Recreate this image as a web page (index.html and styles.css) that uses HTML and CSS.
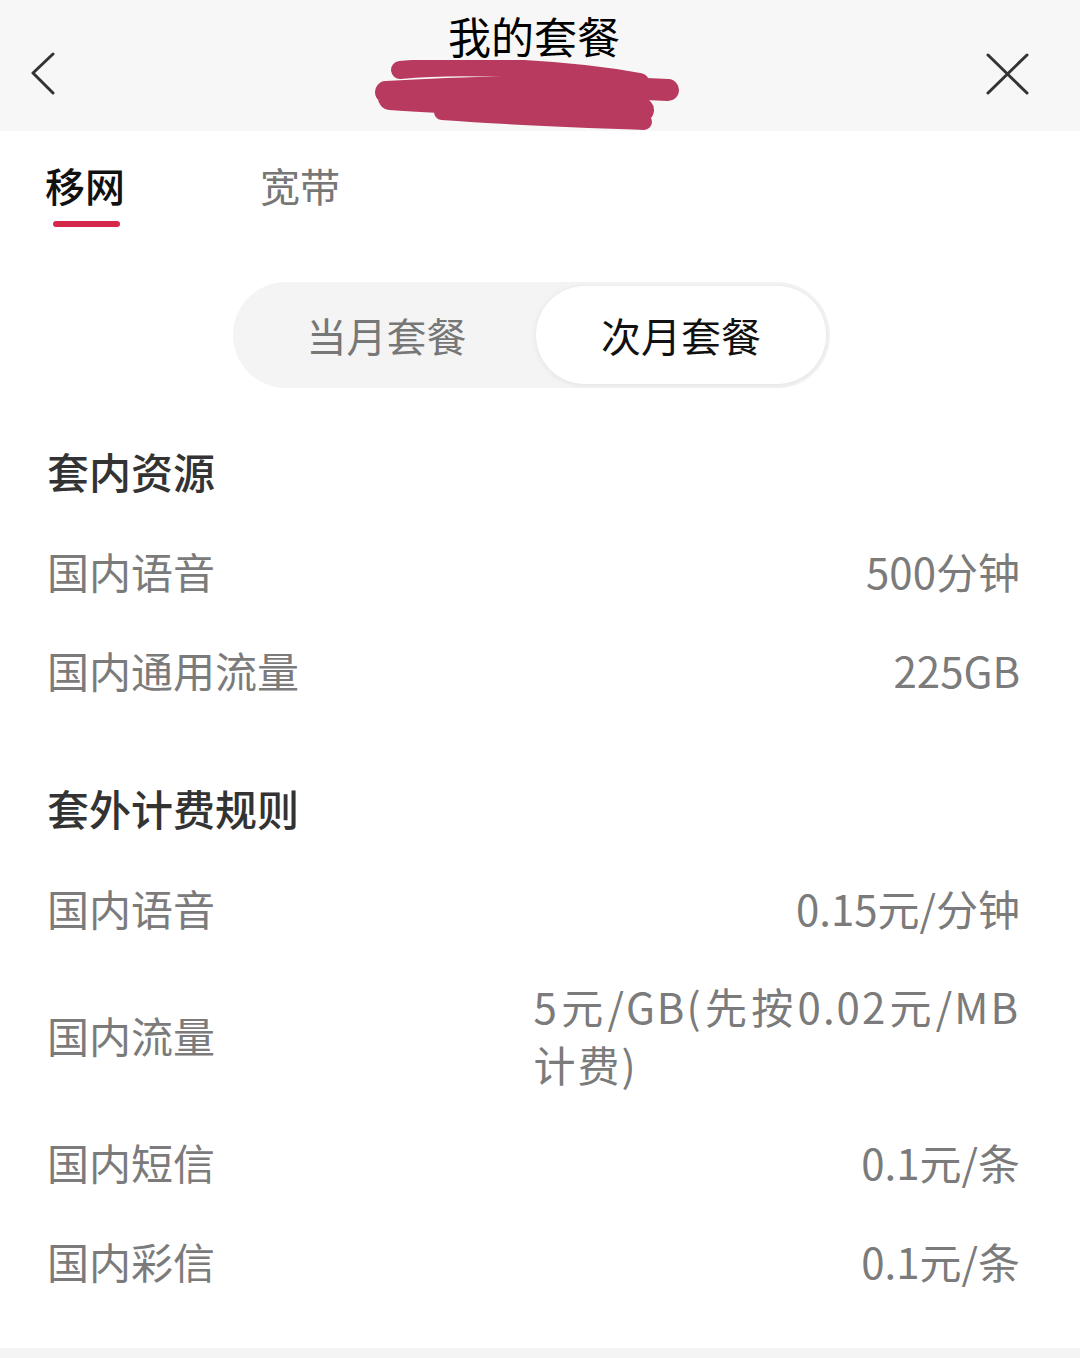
FILE: index.html
```html
<!DOCTYPE html>
<html lang="zh-CN">
<head>
<meta charset="utf-8">
<title>我的套餐</title>
<link rel="stylesheet" href="styles.css">
</head>
<body>
<header class="topbar">
  <button class="icon-btn back" aria-label="返回">
    <svg width="26" height="44" viewBox="0 0 26 44"><path d="M23 2 L3 21 L23 41" fill="none" stroke="#333" stroke-width="3" stroke-linecap="round" stroke-linejoin="round"/></svg>
  </button>
  <h1 class="title">我的套餐</h1>
  <button class="icon-btn close" aria-label="关闭">
    <svg width="44" height="44" viewBox="0 0 44 44"><path d="M2 3 L41 41 M41 3 L2 41" fill="none" stroke="#333" stroke-width="3" stroke-linecap="round"/></svg>
  </button>
  <svg class="redact" width="320" height="72" viewBox="0 0 320 72" aria-hidden="true">
    <g fill="none" stroke="#b83a5e" stroke-linecap="round" stroke-linejoin="round">
      <path d="M28 10 C90 4 190 8 268 22" stroke-width="18"/>
      <path d="M14 32 C110 26 220 26 296 30" stroke-width="22"/>
      <path d="M18 38 C100 44 200 46 270 50" stroke-width="24"/>
      <path d="M70 52 C150 58 220 60 272 62" stroke-width="16"/>
    </g>
  </svg>
</header>

<nav class="tabs">
  <div class="tab active">移网<span class="underline"></span></div>
  <div class="tab">宽带</div>
</nav>

<div class="segment">
  <div class="seg-item">当月套餐</div>
  <div class="seg-item selected">次月套餐</div>
</div>

<main class="content">
  <section class="section">
    <h2 class="section-title">套内资源</h2>
    <div class="rows">
      <div class="row"><span class="label">国内语音</span><span class="value">500分钟</span></div>
      <div class="row"><span class="label">国内通用流量</span><span class="value">225GB</span></div>
    </div>
  </section>
  <section class="section">
    <h2 class="section-title">套外计费规则</h2>
    <div class="rows">
      <div class="row"><span class="label">国内语音</span><span class="value">0.15元/分钟</span></div>
      <div class="row"><span class="label">国内流量</span><span class="value multi">5元/GB(先按0.02元/MB计费)</span></div>
      <div class="row"><span class="label">国内短信</span><span class="value">0.1元/条</span></div>
      <div class="row"><span class="label">国内彩信</span><span class="value">0.1元/条</span></div>
    </div>
  </section>
</main>

<footer class="bottom-strip"></footer>
</body>
</html>
```

FILE: styles.css
```css
* { box-sizing: border-box; }

html, body {
  margin: 0;
  padding: 0;
}

body {
  width: 1080px;
  height: 1358px;
  background: #ffffff;
  font-family: "Noto Sans CJK SC", "Noto Sans", sans-serif;
  display: flex;
  flex-direction: column;
  overflow: hidden;
}

.topbar {
  position: relative;
  height: 131px;
  background: #f7f7f7;
  display: grid;
  grid-template-columns: 1fr auto 1fr;
  align-items: start;
  padding: 0 50px 0 32px;
}

.icon-btn {
  border: 0;
  background: none;
  padding: 0;
  margin-top: 52px;
  display: flex;
}

.back { justify-self: start; margin-left: -2px; }
.close { justify-self: end; }

.title {
  margin: 8px 0 0 0;
  padding-left: 6px;
  font-size: 43px;
  line-height: 54px;
  font-weight: 400;
  color: #000;
}

.redact {
  position: absolute;
  left: 372px;
  top: 60px;
}

.tabs {
  display: flex;
  gap: 135px;
  padding: 30px 0 0 45px;
}

.tab {
  position: relative;
  font-size: 40px;
  line-height: 48px;
  color: #777;
  display: flex;
  flex-direction: column;
  align-items: center;
}

.tab.active {
  color: #111;
  font-weight: 500;
}

.underline {
  width: 67px;
  height: 6px;
  border-radius: 3px;
  background: #d6284a;
  margin-top: 12px;
  margin-left: 3px;
}

.segment {
  margin: 55px 0 0 233px;
  width: 597px;
  height: 106px;
  border-radius: 53px;
  background: #f4f4f4;
  padding: 4px;
  display: grid;
  grid-template-columns: 1fr 290px;
}

.seg-item {
  display: flex;
  align-items: center;
  justify-content: center;
  font-size: 40px;
  color: #777;
  border-radius: 49px;
}

.seg-item.selected {
  background: #ffffff;
  color: #111;
  font-weight: 400;
  box-shadow: 0 1px 6px rgba(0, 0, 0, 0.08);
}

.content {
  padding: 53px 60px 0 47px;
}

.section + .section {
  margin-top: 78px;
}

.section-title {
  margin: 0;
  font-size: 42px;
  line-height: 60px;
  font-weight: 500;
  color: #333;
}

.rows {
  display: flex;
  flex-direction: column;
  gap: 39px;
  margin-top: 40px;
}

.row {
  display: flex;
  justify-content: space-between;
  align-items: center;
  font-size: 42px;
  line-height: 60px;
  color: #7b7b7b;
}

.label {
  flex: none;
}

.value {
  max-width: 50%;
  text-align: justify;
  margin-left: auto;
}

.value.multi {
  line-height: 58px;
  letter-spacing: 2px;
}

.bottom-strip {
  margin-top: auto;
  height: 10px;
  background: #f4f4f4;
}
```
